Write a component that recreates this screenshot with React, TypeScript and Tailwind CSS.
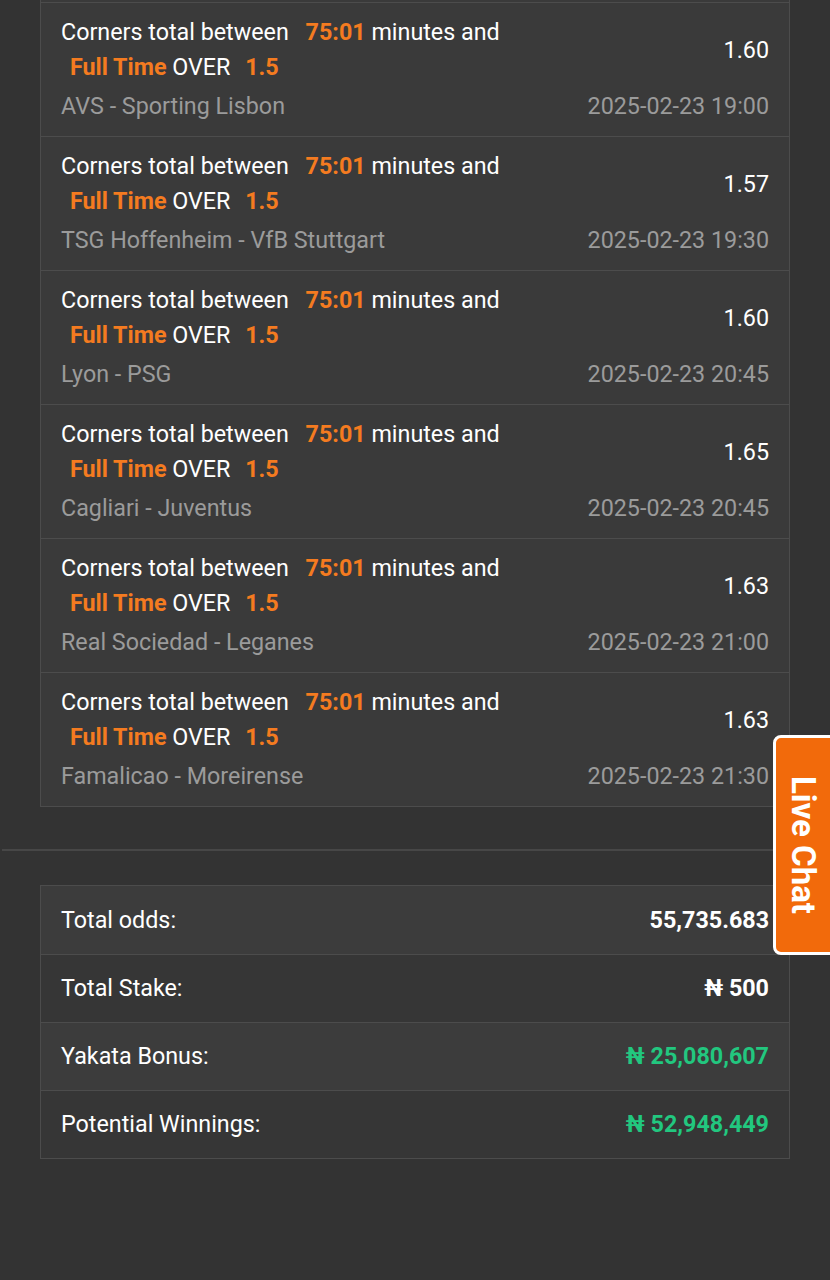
import React from 'react';

interface Bet {
  odds: string;
  teams: string;
  date: string;
}

const bets: Bet[] = [
  { odds: '1.60', teams: 'AVS - Sporting Lisbon', date: '2025-02-23 19:00' },
  { odds: '1.57', teams: 'TSG Hoffenheim - VfB Stuttgart', date: '2025-02-23 19:30' },
  { odds: '1.60', teams: 'Lyon - PSG', date: '2025-02-23 20:45' },
  { odds: '1.65', teams: 'Cagliari - Juventus', date: '2025-02-23 20:45' },
  { odds: '1.63', teams: 'Real Sociedad - Leganes', date: '2025-02-23 21:00' },
  { odds: '1.63', teams: 'Famalicao - Moreirense', date: '2025-02-23 21:30' },
];

const summary = [
  { label: 'Total odds:', value: '55,735.683', green: false, light: true },
  { label: 'Total Stake:', value: '₦ 500', green: false, light: false },
  { label: 'Yakata Bonus:', value: '₦ 25,080,607', green: true, light: true },
  { label: 'Potential Winnings:', value: '₦ 52,948,449', green: true, light: false },
];

function BetRow({ bet }: { bet: Bet }) {
  return (
    <div className="border-t border-[#4c4c4c] bg-[#3a3a3a] px-5 pt-[12px] pb-[12px]">
      <div className="flex items-center justify-between">
        <div className="leading-[35px]">
          <div className="whitespace-pre text-white">
            {'Corners total between '}
            <span className="ml-[11px] font-bold text-[#f47b20]">75:01</span>
            {' minutes and'}
          </div>
          <div className="whitespace-pre text-white">
            <span className="ml-[9px] font-bold text-[#f47b20]">Full Time</span>
            {' OVER '}
            <span className="ml-[9px] font-bold text-[#f47b20]">1.5</span>
          </div>
        </div>
        <div className="text-white">{bet.odds}</div>
      </div>
      <div className="mt-[4px] flex justify-between leading-[35px] text-[#9b9b9b]">
        <span>{bet.teams}</span>
        <span>{bet.date}</span>
      </div>
    </div>
  );
}

export default function App() {
  return (
    <div
      className="relative min-h-[1280px] w-[830px] overflow-hidden bg-[#333333] text-[23.3px]"
      style={{ fontFamily: 'Roboto, "Noto Sans", sans-serif' }}
    >
      {/* Selections list */}
      <div className="mx-10 border-x border-b border-[#4c4c4c]">
        <div className="h-[2px] bg-[#3a3a3a]" />
        {bets.map((bet, i) => (
          <BetRow key={i} bet={bet} />
        ))}
      </div>

      <div className="ml-[2px] mt-[42px] border-t-2 border-[#474747]" />

      {/* Totals */}
      <div className="mx-10 mt-[34px] border border-[#4c4c4c]">
        {summary.map((row, i) => (
          <div
            key={row.label}
            className={`flex h-[68px] items-center justify-between px-5 ${
              i > 0 ? 'border-t border-[#4c4c4c]' : ''
            } ${row.light ? 'bg-[#3c3c3c]' : 'bg-[#363636]'}`}
          >
            <span className="text-white">{row.label}</span>
            <span className={`font-bold ${row.green ? 'text-[#22c77f]' : 'text-white'}`}>
              {row.value}
            </span>
          </div>
        ))}
      </div>

      {/* Live chat tab */}
      <div className="absolute left-[773px] top-[735px] flex h-[220px] w-[70px] items-center rounded-l-lg border-[3px] border-white bg-[#f26a0b] pl-[11px]">
        <span
          className="text-[33px] font-bold leading-none text-white"
          style={{ writingMode: 'vertical-rl' }}
        >
          Live Chat
        </span>
      </div>
    </div>
  );
}
